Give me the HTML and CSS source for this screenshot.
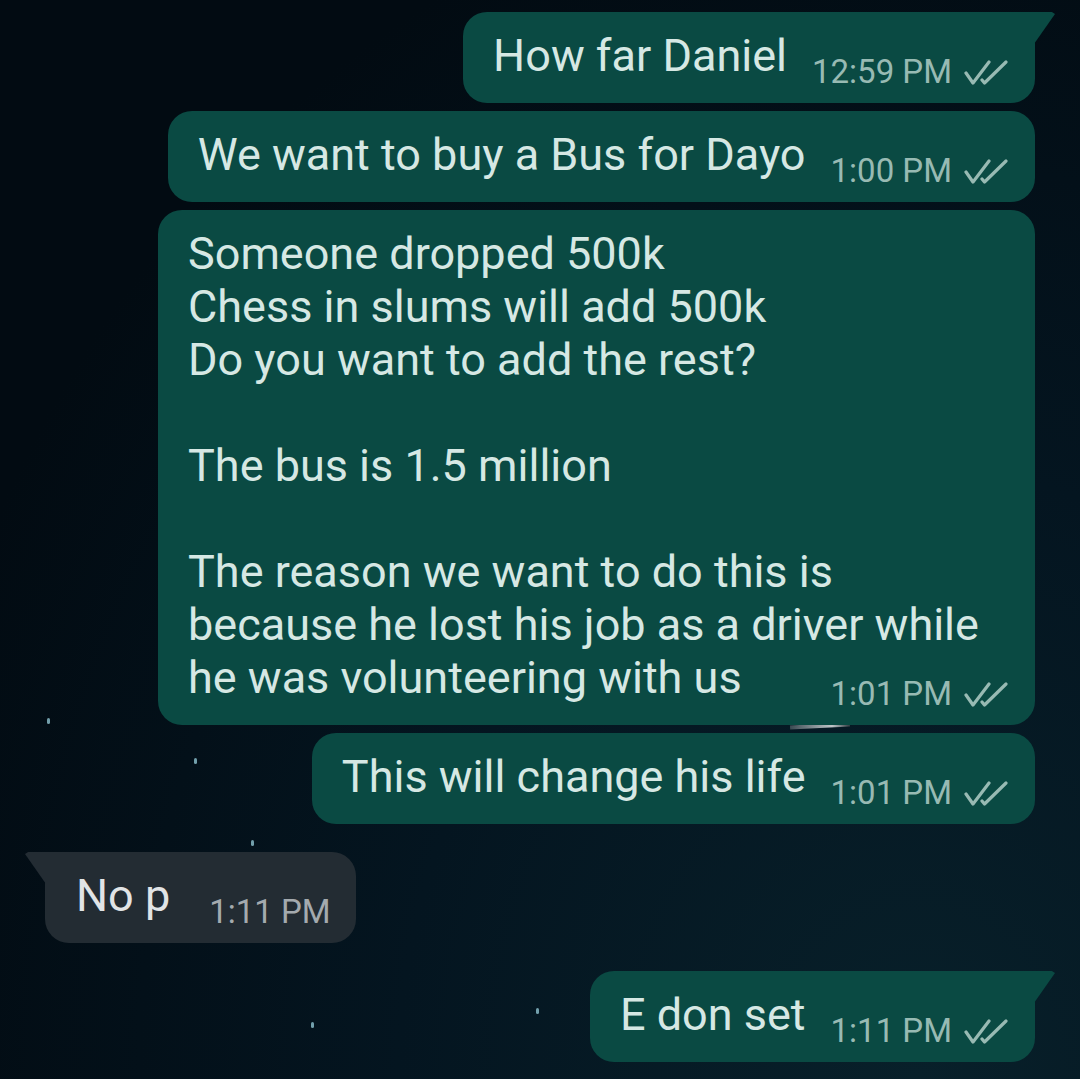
FILE: index.html
```html
<!DOCTYPE html>
<html lang="en">
<head>
<meta charset="utf-8">
<title>Chat</title>
<link rel="stylesheet" href="styles.css">
</head>
<body>
<div class="screen">
  <span class="star s1"></span>
  <span class="star s2"></span>
  <span class="star s3"></span>
  <span class="star s4"></span>
  <span class="star s5"></span>
  <span class="streak"></span>

  <div class="chat">
    <div class="row out">
      <div class="bubble out tail">
        <span class="text">How far Daniel</span>
        <span class="meta"><span class="time">12:59 PM</span><svg class="ticks" viewBox="0 0 44 26"><path d="M2 13 L9 23 L25 2"/><path d="M18 20 L20.5 23 L42 2"/></svg></span>
      </div>
    </div>
    <div class="row out">
      <div class="bubble out">
        <span class="text">We want to buy a Bus for Dayo</span>
        <span class="meta"><span class="time">1:00 PM</span><svg class="ticks" viewBox="0 0 44 26"><path d="M2 13 L9 23 L25 2"/><path d="M18 20 L20.5 23 L42 2"/></svg></span>
      </div>
    </div>
    <div class="row out">
      <div class="bubble out long">
        <p class="text">Someone dropped 500k<br>Chess in slums will add 500k<br>Do you want to add the rest?<br><br>The bus is 1.5 million<br><br>The reason we want to do this is<br>because he lost his job as a driver while<br>he was volunteering with us</p>
        <span class="meta"><span class="time">1:01 PM</span><svg class="ticks" viewBox="0 0 44 26"><path d="M2 13 L9 23 L25 2"/><path d="M18 20 L20.5 23 L42 2"/></svg></span>
      </div>
    </div>
    <div class="row out">
      <div class="bubble out">
        <span class="text">This will change his life</span>
        <span class="meta"><span class="time">1:01 PM</span><svg class="ticks" viewBox="0 0 44 26"><path d="M2 13 L9 23 L25 2"/><path d="M18 20 L20.5 23 L42 2"/></svg></span>
      </div>
    </div>
    <div class="row in">
      <div class="bubble in tail">
        <span class="text">No p</span>
        <span class="meta"><span class="time">1:11 PM</span></span>
      </div>
    </div>
    <div class="row out spaced">
      <div class="bubble out tail">
        <span class="text">E don set</span>
        <span class="meta"><span class="time">1:11 PM</span><svg class="ticks" viewBox="0 0 44 26"><path d="M2 13 L9 23 L25 2"/><path d="M18 20 L20.5 23 L42 2"/></svg></span>
      </div>
    </div>
  </div>
</div>
</body>
</html>
```

FILE: styles.css
```css
* { box-sizing: border-box; }

html, body {
  margin: 0;
  padding: 0;
  background: #020c13;
}

.screen {
  position: relative;
  width: 1080px;
  height: 1079px;
  overflow: hidden;
  background: radial-gradient(ellipse at 85% 100%, #08202a 0%, #041520 40%, #020b12 80%);
  font-family: Roboto, "Noto Sans", "Liberation Sans", sans-serif;
}

.chat {
  position: relative;
  display: flex;
  flex-direction: column;
  gap: 8px;
  padding-top: 12px;
}

.row {
  display: flex;
}

.row.out {
  justify-content: flex-end;
  padding-right: 45px;
}

.row.in {
  justify-content: flex-start;
  padding-left: 45px;
  margin-top: 20px;
}

.row.spaced {
  margin-top: 20px;
}

.bubble {
  position: relative;
  display: flex;
  align-items: flex-end;
  padding: 17px 27px 12px 30px;
  border-radius: 24px;
}

.bubble.out {
  background: #0a4a43;
}

.bubble.in {
  background: #232c33;
  padding-left: 31px;
  padding-right: 25px;
}

.bubble.out.tail {
  border-top-right-radius: 0;
}

.bubble.in.tail {
  border-top-left-radius: 0;
}

.bubble.out.tail::after {
  content: "";
  position: absolute;
  top: 0;
  right: -20px;
  width: 21px;
  height: 32px;
  background: #0a4a43;
  clip-path: polygon(0 0, 85% 0, 100% 6%, 0 100%);
}

.bubble.in.tail::after {
  content: "";
  position: absolute;
  top: 0;
  left: -20px;
  width: 21px;
  height: 32px;
  background: #232c33;
  clip-path: polygon(15% 0, 100% 0, 100% 100%, 0 6%);
}

.text {
  margin: 0 0 9px 0;
  font-size: 45px;
  line-height: 53px;
  color: #d6e8e4;
  white-space: nowrap;
}

.bubble.in .text {
  color: #e1e4e6;
}

.meta {
  display: flex;
  align-items: center;
  margin-left: 25px;
  line-height: 38px;
  white-space: nowrap;
}

.time {
  font-size: 33px;
  color: #98bab3;
}

.bubble.in .time {
  color: #a4aaae;
  margin-left: 14px;
}

.ticks {
  width: 44px;
  height: 26px;
  margin-left: 12px;
  margin-top: 1px;
  fill: none;
  stroke: #98bab3;
  stroke-width: 3.2;
  stroke-linecap: round;
  stroke-linejoin: round;
}

.bubble.long {
  display: block;
  width: 877px;
}

.bubble.long .meta {
  justify-content: flex-end;
  margin-top: -38px;
  margin-left: 0;
}

.star {
  position: absolute;
  width: 3px;
  height: 6px;
  border-radius: 2px;
  background: #8fc3d0;
  opacity: 0.8;
}

.s1 { left: 47px; top: 718px; }
.s2 { left: 194px; top: 758px; }
.s3 { left: 251px; top: 840px; }
.s4 { left: 536px; top: 1008px; }
.s5 { left: 311px; top: 1022px; }

.streak {
  position: absolute;
  left: 790px;
  top: 724px;
  width: 60px;
  height: 4px;
  background: linear-gradient(90deg, #3a4a52, #c0c6c9 70%, #303a40);
  transform: rotate(-3deg);
}
```
